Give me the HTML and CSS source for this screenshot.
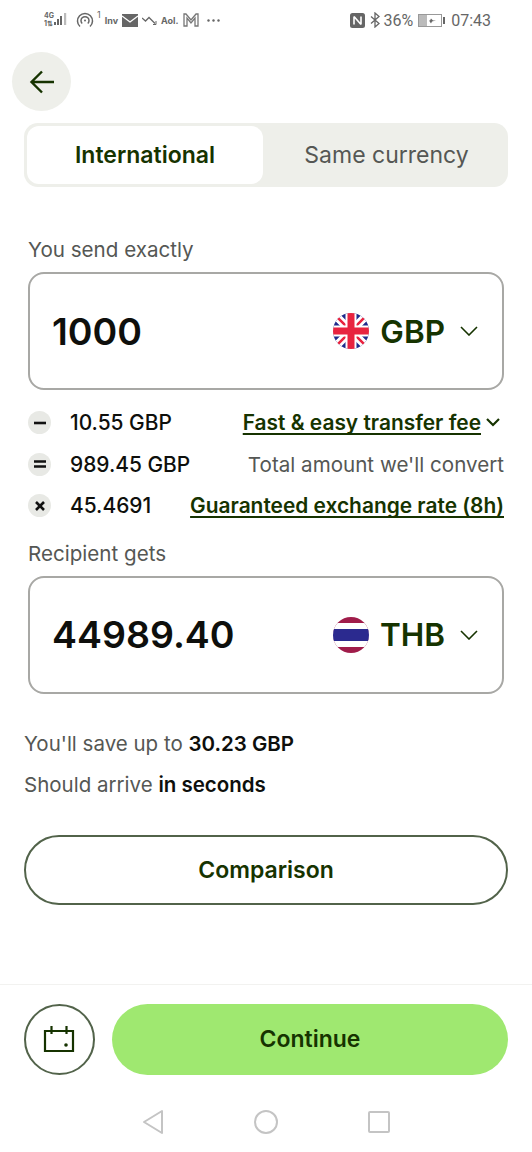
FILE: index.html
```html
<!DOCTYPE html>
<html lang="en">
<head>
<meta charset="utf-8">
<title>Transfer</title>
<link rel="stylesheet" href="styles.css">
</head>
<body>
<div class="status">
  <div class="status-left">
    <svg width="27" height="18" viewBox="0 0 27 18"><text x="0" y="7" class="tiny">4G</text><text x="0" y="14.500" class="tiny">1⇅</text><g fill="#666"><rect x="10" y="11" width="2" height="3"/><rect x="13" y="8" width="2" height="6"/><rect x="16" y="5" width="2" height="9"/></g><rect x="20" y="2" width="2.200" height="12" fill="#bbb"/></svg>
    <svg class="ic-wifi" width="18" height="18" viewBox="0 0 18 18" fill="none" stroke="#666" stroke-width="1.500"><path d="M4 15.500A7.500 7.500 0 1 1 14 15.500"/><path d="M6.200 12.500A4 4 0 1 1 11.800 12.500"/><circle cx="9" cy="9.500" r="1" fill="#666" stroke="none"/></svg>
    <span class="sup">1</span>
    <span class="mini inv">Inv</span>
    <svg width="16" height="13" viewBox="0 0 16 13"><rect width="16" height="13" fill="#666"/><path d="M0 2l8 6 8-6" fill="none" stroke="#fff" stroke-width="1.300"/></svg>
    <svg width="15" height="9" viewBox="0 0 15 9" fill="none" stroke="#666" stroke-width="1.300"><path d="M0 2l3.500 3L7 1.500l6 6"/><path d="M14 5v3.500h-3" stroke-width="1"/></svg>
    <span class="mini aol">Aol.</span>
    <svg width="16" height="14" viewBox="0 0 16 14" fill="none" stroke="#777" stroke-width="1.300"><path d="M1 13V1h2l5 6 5-6h2v12h-3V5L8 10 4 5v8z"/></svg>
    <svg class="ic-dots" width="13" height="3" viewBox="0 0 13 3" fill="#666"><circle cx="1.500" cy="1.500" r="1.200"/><circle cx="6.500" cy="1.500" r="1.200"/><circle cx="11.500" cy="1.500" r="1.200"/></svg>
  </div>
  <div class="status-right">
    <svg class="ic-nfc" width="15" height="15" viewBox="0 0 15 15"><rect width="15" height="15" rx="2.500" fill="#666"/><path d="M4 3.500v8M11 3.500v8M4 3.500l7 8" fill="none" stroke="#fff" stroke-width="1.600"/></svg>
    <svg class="ic-bt" width="10" height="16" viewBox="0 0 10 16" fill="none" stroke="#666" stroke-width="1.300"><path d="M1 4.500l8 7-4 3.500V1l4 3.500-8 7"/></svg>
    <span class="pct">36%</span>
    <svg width="27" height="13" viewBox="0 0 27 13"><rect x=".5" y=".5" width="23" height="12" fill="#fff" stroke="#999"/><rect x="1" y="1" width="8" height="11" fill="#bbb"/><path d="M7 6.500h5l1-2 2 2h3l-4 1-1 2-2-3z" fill="#666"/><rect x="25" y="3" width="2" height="7" fill="#666"/></svg>
    <span class="time">07:43</span>
  </div>
</div>

<main class="page">
  <button class="back" aria-label="Back">
    <svg width="28" height="28" viewBox="0 0 28 28" fill="none" stroke="#163300" stroke-width="2.400"><path d="M26 14H4M14 3.500L3.500 14 14 24.500"/></svg>
  </button>

  <div class="tabs">
    <div class="tab active">International</div>
    <div class="tab">Same currency</div>
  </div>

  <div class="inner">
    <div class="label first">You send exactly</div>
    <div class="box">
      <span class="amount">1000</span>
      <div class="cur">
        <svg class="flag" width="36" height="36" viewBox="0 0 36 36">
          <defs><clipPath id="c1"><circle cx="18" cy="18" r="18"/></clipPath></defs>
          <g clip-path="url(#c1)">
            <rect width="36" height="36" fill="#1f2a8c"/>
            <path d="M0 0L36 36M36 0L0 36" stroke="#fff" stroke-width="8"/>
            <path d="M0 0L36 36M36 0L0 36" stroke="#e8233f" stroke-width="2.500"/>
            <path d="M18 0V36M0 18H36" stroke="#fff" stroke-width="11"/>
            <path d="M18 0V36M0 18H36" stroke="#e8233f" stroke-width="7"/>
          </g>
        </svg>
        <span class="code">GBP</span>
        <svg class="chev" width="18" height="10" viewBox="0 0 18 10" fill="none" stroke="#163300" stroke-width="1.600"><path d="M1 1l8 8 8-8"/></svg>
      </div>
    </div>

    <div class="rows">
      <div class="row">
        <span class="op"><svg width="12" height="12" viewBox="0 0 12 12" stroke="#111" stroke-width="2.600"><path d="M0 6h12"/></svg></span>
        <span class="val">10.55 GBP</span>
        <a class="link">Fast &amp; easy transfer fee</a>
        <svg class="link-chev" width="14" height="9" viewBox="0 0 14 9" fill="none" stroke="#163300" stroke-width="2.200"><path d="M1 1l6 6 6-6"/></svg>
      </div>
      <div class="row">
        <span class="op"><svg width="12" height="12" viewBox="0 0 12 12" stroke="#111" stroke-width="2.400"><path d="M0 3.500h12M0 8.500h12"/></svg></span>
        <span class="val">989.45 GBP</span>
        <span class="note">Total amount we'll convert</span>
      </div>
      <div class="row">
        <span class="op"><svg width="12" height="12" viewBox="0 0 12 12" stroke="#111" stroke-width="2.600"><path d="M2 2l8 8M10 2l-8 8"/></svg></span>
        <span class="val">45.4691</span>
        <a class="link">Guaranteed exchange rate (8h)</a>
      </div>
    </div>

    <div class="label second">Recipient gets</div>
    <div class="box">
      <span class="amount">44989.40</span>
      <div class="cur">
        <svg class="flag" width="36" height="36" viewBox="0 0 36 36">
          <defs><clipPath id="c2"><circle cx="18" cy="18" r="18"/></clipPath></defs>
          <g clip-path="url(#c2)">
            <rect width="36" height="36" fill="#a01c4a"/>
            <rect y="6" width="36" height="24" fill="#fff"/>
            <rect y="12" width="36" height="12" fill="#2b2a8f"/>
          </g>
        </svg>
        <span class="code">THB</span>
        <svg class="chev" width="18" height="10" viewBox="0 0 18 10" fill="none" stroke="#163300" stroke-width="1.600"><path d="M1 1l8 8 8-8"/></svg>
      </div>
    </div>
  </div>

  <p class="info save">You'll save up to <b>30.23 GBP</b></p>
  <p class="info arrive">Should arrive <b>in seconds</b></p>

  <button class="compare">Comparison</button>
</main>

<footer class="footer">
  <button class="cal" aria-label="Schedule">
    <svg class="cal-ic" width="32" height="28" viewBox="0 0 32 28" fill="none" stroke="#163300" stroke-width="2.200"><path d="M2 6h28v20H2z"/><path d="M8.500 1v8M23.500 1v8" /><circle cx="23" cy="20" r="1.800" fill="#163300" stroke="none"/></svg>
  </button>
  <button class="continue">Continue</button>
</footer>

<nav class="nav">
  <svg width="22" height="26" viewBox="0 0 22 26" fill="none" stroke="#c4c4c4" stroke-width="2" stroke-linejoin="round"><path d="M20 2v22L2 13z"/></svg>
  <svg width="24" height="24" viewBox="0 0 24 24" fill="none" stroke="#c4c4c4" stroke-width="2"><circle cx="12" cy="12" r="11"/></svg>
  <svg width="22" height="22" viewBox="0 0 22 22" fill="none" stroke="#c4c4c4" stroke-width="2"><rect x="1" y="1" width="20" height="20" rx="1"/></svg>
</nav>
</body>
</html>
```
FILE: styles.css
```css
* { box-sizing: border-box; }
html, body { margin: 0; padding: 0; }
body {
  width: 532px;
  height: 1152px;
  overflow: hidden;
  background: #fff;
  font-family: Inter, "Liberation Sans", sans-serif;
  color: #111;
}
button { font-family: inherit; border: 0; padding: 0; background: none; }
.status {
  height: 40px;
  display: flex;
  justify-content: space-between;
  align-items: center;
  padding: 0 41px 0 44px;
  color: #666;
}
.status-left { display: flex; align-items: center; gap: 4px; }
.status-right { display: flex; align-items: center; gap: 4px; }
.ic-wifi { margin-left: 1px; }
.ic-dots { margin-left: 4px; }
.ic-nfc { margin-right: 1px; }
.ic-bt { margin-left: 0; }
.tiny { font: 700 7px Inter, sans-serif; fill: #666; }
.sup { font-size: 9px; margin: -12px 0 0 -1px; }
.mini { font-size: 9px; font-weight: 700; color: #666; }
.pct { font: 16px Roboto, sans-serif; margin: 0 1px 0 -1px; }
.time { font: 16px Roboto, sans-serif; margin-left: 2px; }

.page { padding: 12px 24px 0; }
.back {
  display: flex;
  align-items: center;
  justify-content: center;
  width: 59px;
  height: 59px;
  margin-left: -12px;
  border-radius: 50%;
  background: #eeefea;
}
.tabs {
  display: flex;
  height: 64px;
  margin-top: 12px;
  padding: 3px;
  border-radius: 14px;
  background: #eeefea;
}
.tab {
  flex: 1;
  display: flex;
  align-items: center;
  justify-content: center;
  padding-left: 5px;
  border-radius: 12px;
  font-size: 23px;
  color: #555754;
}
.tab.active {
  flex: 0 0 236px;
  padding-left: 0;
  background: #fff;
  color: #163300;
  font-weight: 600;
}
.inner { padding: 0 4px; }
.label { font-size: 20.600px; line-height: 24px; color: #555754; }
.label.first { margin-top: 51px; }
.label.second { margin-top: 15px; }
.box {
  display: flex;
  align-items: center;
  justify-content: space-between;
  height: 118px;
  margin-top: 10px;
  padding: 0 24px 0 22px;
  border: 2px solid #a8a8a5;
  border-radius: 16px;
}
.amount { font-size: 37.500px; font-weight: 600; color: #0e0f0c; }
.cur { display: flex; align-items: center; }
.flag { display: block; }
.code { font-size: 31.500px; font-weight: 600; color: #163300; margin-left: 11px; }
.chev { margin-left: 15px; }
.rows { margin-top: 12px; }
.row { display: flex; align-items: center; height: 41.500px; font-size: 20.900px; }
.op {
  flex: none;
  display: flex;
  align-items: center;
  justify-content: center;
  width: 23px;
  height: 23px;
  border-radius: 50%;
  background: #e8e9e5;
}
.val { margin-left: 19px; font-weight: 500; color: #0e0f0c; }
.link {
  margin-left: auto;
  color: #163300;
  font-weight: 600;
  text-decoration: underline;
  text-decoration-skip-ink: none;
  text-decoration-thickness: 2px;
  text-underline-offset: 3px;
}
.link-chev { margin-left: 5px; margin-right: 4px; }
.note { margin-left: auto; font-size: 20.600px; color: #555754; }
.info { margin: 0; font-size: 20.500px; line-height: 24px; color: #555754; }
.info b { font-weight: 600; color: #0e0f0c; }
.save { margin-top: 38px; }
.arrive { margin-top: 17px; }
.compare {
  display: block;
  width: 484px;
  height: 70px;
  margin-top: 38px;
  border: 2px solid #52634a;
  border-radius: 35px;
  font-size: 23px;
  font-weight: 600;
  color: #163300;
  background: #fff;
}
.footer {
  display: flex;
  gap: 17px;
  margin-top: 79px;
  padding: 19px 24px 0;
  border-top: 1px solid #f2f2f0;
}
.cal {
  flex: none;
  display: flex;
  align-items: center;
  justify-content: center;
  width: 71px;
  height: 71px;
  border: 2px solid #52634a;
  border-radius: 50%;
}
.cal-ic { margin-right: 2px; }
.continue {
  flex: 1;
  height: 71px;
  border-radius: 36px;
  background: #9fe870;
  font-size: 23px;
  font-weight: 600;
  color: #163300;
}
.nav {
  display: flex;
  align-items: center;
  justify-content: center;
  gap: 90px;
  margin-top: 34px;
}
```
